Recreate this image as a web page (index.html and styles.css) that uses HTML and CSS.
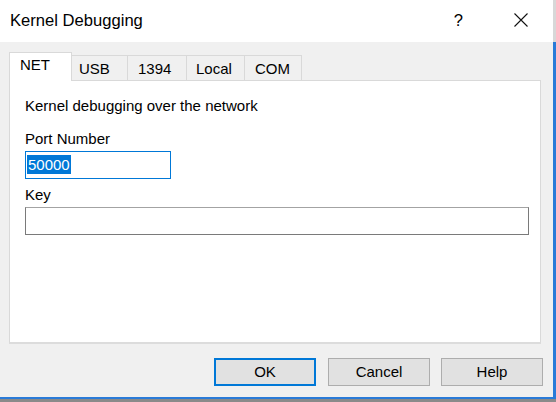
FILE: index.html
```html
<!DOCTYPE html>
<html>
<head>
<meta charset="utf-8">
<link rel="stylesheet" href="styles.css">
</head>
<body>
<div class="window">
  <div class="titlebar">
    <span class="title">Kernel Debugging</span>
    <span class="help-btn">?</span>
    <span class="close-btn">
      <svg width="14" height="14" viewBox="0 0 14 14"><path d="M0.5 0.5 L13.5 13.5 M13.5 0.5 L0.5 13.5" stroke="#111" stroke-width="1.1" fill="none"/></svg>
    </span>
  </div>
  <div class="content">
    <div class="tabs">
      <div class="tab active">NET</div>
      <div class="tab tab-usb">USB</div>
      <div class="tab tab-1394">1394</div>
      <div class="tab tab-local">Local</div>
      <div class="tab tab-com">COM</div>
    </div>
    <div class="panel">
      <div class="label">Kernel debugging over the network</div>
      <div class="label gap">Port Number</div>
      <div class="input port"><span class="sel">50000</span></div>
      <div class="label gap-small">Key</div>
      <div class="input key"></div>
    </div>
    <div class="buttons">
      <div class="btn default">OK</div>
      <div class="btn">Cancel</div>
      <div class="btn">Help</div>
    </div>
  </div>
  <div class="shadow"></div>
</div>
</body>
</html>
```

FILE: styles.css
```css
html, body {
  margin: 0;
  padding: 0;
  background: #f0f0f0;
}
body {
  font-family: "Liberation Sans", Arial, sans-serif;
  font-size: 15px;
  color: #000;
}
.window {
  width: 556px;
  height: 402px;
  display: flex;
  flex-direction: column;
  overflow: hidden;
}
.titlebar {
  height: 42px;
  background: #fff;
  display: flex;
  align-items: flex-start;
  box-sizing: border-box;
  padding-left: 10px;
  border-right: 3px solid #d8d8d8;
}
.title {
  font-size: 16.6px;
  line-height: 20px;
  margin-top: 11px;
}
.help-btn {
  margin-left: auto;
  font-size: 16.6px;
  line-height: 20px;
  margin-top: 11px;
}
.close-btn {
  margin-left: 51px;
  margin-right: 25px;
  margin-top: 13px;
  width: 14px;
  height: 14px;
  display: flex;
}
.content {
  flex: 1;
  display: flex;
  flex-direction: column;
  border-right: 3px solid #2a7bd8;
  border-bottom: 2px solid #2a7bd8;
  background: #f0f0f0;
}
.tabs {
  display: flex;
  align-items: flex-end;
  margin-top: 10px;
  padding-left: 9px;
  height: 28px;
  position: relative;
  z-index: 1;
}
.tab {
  box-sizing: border-box;
  height: 25px;
  border: 1px solid #d9d9d9;
  border-bottom: none;
  border-left: none;
  background: #f0f0f0;
  padding-left: 9px;
  line-height: 24px;
  padding-top: 1px;
}
.tab.active {
  height: 29px;
  margin-bottom: -1px;
  border-left: 1px solid #d9d9d9;
  border-right: 1px solid #d9d9d9;
  background: #fff;
  width: 63px;
  padding-left: 10px;
  padding-top: 0;
  line-height: 24px;
}
.tab-usb { width: 56px; padding-left: 7px; }
.tab-1394 { width: 59px; padding-left: 10px; }
.tab-local { width: 58px; padding-left: 9px; }
.tab-com { width: 57px; padding-left: 10px; }
.panel {
  margin-left: 9px;
  width: 532px;
  height: 264px;
  box-sizing: border-box;
  background: #fff;
  border: 1px solid #d9d9d9;
  border-bottom: 2px solid #dcdcdc;
  padding: 15px 0 0 15px;
}
.label {
  line-height: 20px;
  height: 20px;
}
.label.gap {
  margin-top: 13px;
}
.label.gap-small {
  margin-top: 6px;
}
.input {
  box-sizing: border-box;
  height: 28px;
  margin-top: 2px;
  background: #fff;
  border: 1px solid #7a7a7a;
  border-top-color: #a3a3a3;
}
.input.port {
  width: 146px;
  border-color: #0078d7;
  padding: 3px 0 0 1px;
}
.sel {
  display: inline-block;
  background: #0078d7;
  color: #fff;
  line-height: 19px;
  padding: 0 1px;
}
.input.key {
  width: 504px;
}
.buttons {
  display: flex;
  justify-content: flex-end;
  gap: 11px;
  margin-top: 14px;
  padding-right: 10px;
}
.btn {
  box-sizing: border-box;
  width: 102px;
  height: 28px;
  background: #e1e1e1;
  border: 1px solid #adadad;
  text-align: center;
  line-height: 26px;
}
.btn.default {
  border: 2px solid #0078d7;
  line-height: 24px;
  margin-right: 1px;
}
.shadow {
  height: 3px;
  background: #8a8a8a;
}
```
